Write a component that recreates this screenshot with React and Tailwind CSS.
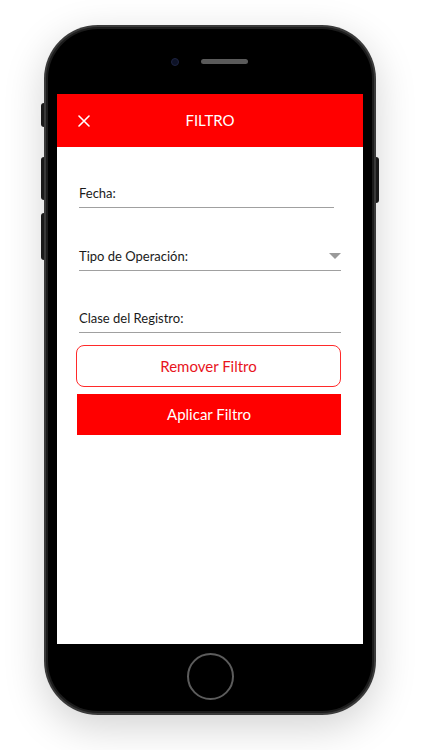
import React from "react";

export default function App() {
  return (
    <div
      className="w-[422px] h-[750px] bg-white pt-[25px] pl-[44px]"
      style={{ fontFamily: "Lato, 'Open Sans', sans-serif" }}
    >
      <div className="relative w-[332px] h-[690px]">
        {/* side buttons */}
        <div className="absolute left-[-3px] top-[78px] w-[3px] h-[24px] rounded-l bg-[#1a1a1a]" />
        <div className="absolute left-[-3px] top-[132px] w-[3px] h-[43px] rounded-l bg-[#1a1a1a]" />
        <div className="absolute left-[-3px] top-[188px] w-[3px] h-[47px] rounded-l bg-[#1a1a1a]" />
        <div className="absolute right-[-3px] top-[132px] w-[3px] h-[46px] rounded-r bg-[#1a1a1a]" />

        <div className="w-full h-full rounded-[54px] bg-[#3a3a3a] p-[2px] shadow-[0_12px_40px_rgba(0,0,0,0.18)]">
          <div className="w-full h-full rounded-[52px] bg-[#1c1c1c] p-[2px]">
            <div className="w-full h-full rounded-[50px] bg-black flex flex-col items-center">
              {/* top bezel */}
              <div className="h-[65px] w-full flex items-center justify-center gap-[20px]">
                <div className="w-[8px] h-[8px] rounded-full bg-[#0d1226] border border-[#1d2340] translate-x-[-2px]" />
                <div className="w-[47px] h-[5px] rounded-full bg-[#5a5a5a]" />
              </div>
              {/* screen */}
              <div className="w-[306px] h-[550px] bg-white flex flex-col">
                <div className="h-[53px] bg-[#ff0000] grid grid-cols-[1fr_auto_1fr] items-center">
                  <div className="pl-[21px] flex items-center">
                    <svg width="12" height="12" viewBox="0 0 12 12" fill="none" stroke="white" strokeWidth="1.6" strokeLinecap="round">
                      <path d="M1 1L11 11M11 1L1 11" />
                    </svg>
                  </div>
                  <div className="text-white text-[15px] leading-none">FILTRO</div>
                  <div />
                </div>
                <div className="px-[22px] flex flex-col">
                  <div className="mt-[36px] w-[255px] border-b border-[#a0a0a0] pb-[4px] text-[13px] leading-[20px] text-[#1a1a1a]">
                    Fecha:
                  </div>
                  <div className="mt-[38px] border-b border-[#a0a0a0] pb-[4px] text-[13px] leading-[20px] text-[#1a1a1a] flex items-center justify-between">
                    <span>Tipo de Operación:</span>
                    <svg width="12" height="6" viewBox="0 0 12 6" className="mb-[1px]">
                      <path d="M0 0H12L6 6Z" fill="#9a9a9a" />
                    </svg>
                  </div>
                  <div className="mt-[37px] border-b border-[#a0a0a0] pb-[4px] text-[13px] leading-[20px] text-[#1a1a1a]">
                    Clase del Registro:
                  </div>
                  <button className="mt-[12px] ml-[-3px] h-[42px] rounded-[8px] border border-[#ff2a2a] text-[#e8141c] text-[15px] flex items-center justify-center">
                    Remover Filtro
                  </button>
                  <button className="mt-[7px] ml-[-2px] h-[41px] bg-[#ff0000] text-white text-[15px] flex items-center justify-center">
                    Aplicar Filtro
                  </button>
                </div>
              </div>
              {/* bottom bezel */}
              <div className="flex-1 w-full flex items-center justify-center pb-[2px]">
                <div className="w-[47px] h-[47px] rounded-full border-[2px] border-[#5c5c5c]" />
              </div>
            </div>
          </div>
        </div>
      </div>
    </div>
  );
}
